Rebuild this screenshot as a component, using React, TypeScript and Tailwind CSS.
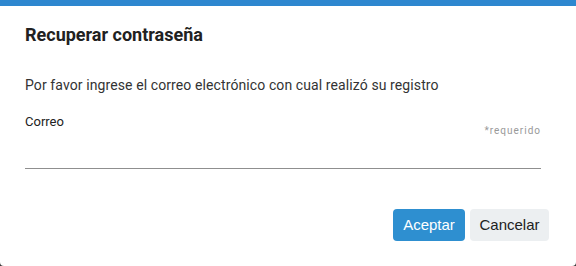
export default function App() {
  return (
    <div className="w-[576px] h-[266px] bg-[#3a3a3a]">
      <div className="flex h-full flex-col overflow-hidden rounded-b-[4px] bg-white font-['Roboto',sans-serif]">
        <div className="h-[6px] bg-[#2e87cf]" />
        <div className="pl-[25px] pr-[35px]">
          <h2 className="mt-[18px] text-[18px] font-bold leading-[22px] text-[#212121]">Recuperar contraseña</h2>
          <p className="mt-[30px] text-[14px] leading-[18px] tracking-[0.1px] text-[#333]">
            Por favor ingrese el correo electrónico con cual realizó su registro
          </p>
          <div className="mt-[20px]">
            <div className="flex h-[16px] items-start justify-between">
              <label className="text-[13px] leading-[16px] text-[#222]">Correo</label>
              <span className="mt-[11px] text-[10px] leading-[12px] tracking-[1px] text-[#999]">*requerido</span>
            </div>
            <input
              type="email"
              className="mt-[19px] block h-[20px] w-full border-b border-[#8f8f8f] bg-transparent text-[14px] outline-none"
            />
          </div>
        </div>
        <div className="mt-[40px] flex justify-end gap-[5px] pr-[27px] font-['Liberation_Sans',Arial,sans-serif]">
          <button className="h-[32px] w-[72px] rounded-[4px] bg-[#2e8fd0] text-[15px] text-white">Aceptar</button>
          <button className="h-[32px] w-[79px] rounded-[4px] bg-[#eceff1] text-[15px] text-[#222]">Cancelar</button>
        </div>
      </div>
    </div>
  )
}
